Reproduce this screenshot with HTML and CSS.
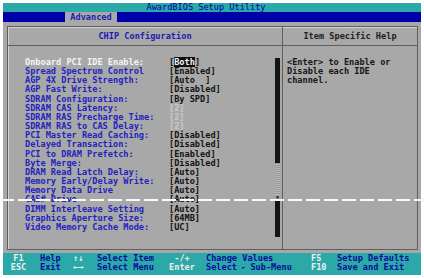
FILE: index.html
```html
<!DOCTYPE html>
<html lang="en">
<head>
  <meta charset="UTF-8">
  <title>AwardBIOS Setup Utility</title>
  <link rel="stylesheet" href="styles.css">
</head>
<body>
  <div class="screen">
    <div class="titlebar">AwardBIOS Setup Utility</div>
    <div class="menubar"><span class="tab">Advanced</span></div>

    <div class="frame">
      <div class="frame-head">
        <div class="head-main">CHIP Configuration</div>
        <div class="head-help">Item Specific Help</div>
      </div>

      <div class="frame-body">
        <div class="items">
          <div class="item-list">
            <div class="row current"><span class="label">Onboard PCI IDE Enable:</span><span class="value">[<span class="sel">Both</span>]</span></div>
            <div class="row"><span class="label">Spread Spectrum Control</span><span class="value">[Enabled]</span></div>
            <div class="row"><span class="label">AGP 4X Drive Strength:</span><span class="value">[Auto  ]</span></div>
            <div class="row"><span class="label">AGP Fast Write:</span><span class="value">[Disabled]</span></div>
            <div class="row"><span class="label">SDRAM Configuration:</span><span class="value">[By SPD]</span></div>
            <div class="row"><span class="label">SDRAM CAS Latency:</span><span class="value off">[2]</span></div>
            <div class="row"><span class="label">SDRAM RAS Precharge Time:</span><span class="value off">[2]</span></div>
            <div class="row"><span class="label">SDRAM RAS to CAS Delay:</span><span class="value off">[2]</span></div>
            <div class="row"><span class="label">PCI Master Read Caching:</span><span class="value">[Disabled]</span></div>
            <div class="row"><span class="label">Delayed Transaction:</span><span class="value">[Disabled]</span></div>
            <div class="row"><span class="label">PCI to DRAM Prefetch:</span><span class="value">[Enabled]</span></div>
            <div class="row"><span class="label">Byte Merge:</span><span class="value">[Disabled]</span></div>
            <div class="row"><span class="label">DRAM Read Latch Delay:</span><span class="value">[Auto]</span></div>
            <div class="row"><span class="label">Memory Early/Delay Write:</span><span class="value">[Auto]</span></div>
            <div class="row"><span class="label">Memory Data Drive</span><span class="value">[Auto]</span></div>
            <div class="row"><span class="label">CAS# Drive</span><span class="value">[Auto]</span></div>
            <div class="row"><span class="label">DIMM Interleave Setting</span><span class="value">[Auto]</span></div>
            <div class="row"><span class="label">Graphics Aperture Size:</span><span class="value">[64MB]</span></div>
            <div class="row"><span class="label">Video Memory Cache Mode:</span><span class="value">[UC]</span></div>
          </div>
          <div class="scrollbar">
            <div class="bar-top"></div>
            <div class="bar-thumb"></div>
            <div class="bar-arrow">&#9660;</div>
            <div class="bar-bottom"></div>
          </div>
        </div>
        <div class="help">
          &lt;Enter&gt; to Enable or<br>
          Disable each IDE<br>
          channel.
        </div>
      </div>
    </div>

    <div class="footer">
      <span class="key mid">F1</span><span class="desc pad6">Help</span>
      <span class="key">&uarr;&darr;</span><span class="desc">Select Item</span>
      <span class="key mid">-/+</span><span class="desc pad2">Change Values</span>
      <span class="key">F5</span><span class="desc">Setup Defaults</span>

      <span class="key mid">ESC</span><span class="desc pad6">Exit</span>
      <span class="key">&larr;&rarr;</span><span class="desc">Select Menu</span>
      <span class="key mid">Enter</span><span class="desc pad2">Select <span class="tri">&#9658;</span> Sub-Menu</span>
      <span class="key">F10</span><span class="desc">Save and Exit</span>
    </div>
  </div>

  <!-- scan artefact across the photo -->
  <div class="scanline"></div>
</body>
</html>
```

FILE: styles.css
```css
* {
  box-sizing: border-box;
}

body {
  margin: 0;
  width: 424px;
  height: 278px;
  overflow: hidden;
  position: relative;
  background: #fff;
  font-family: "DejaVu Sans Mono", "Liberation Mono", monospace;
  font-weight: bold;
  font-size: 8.6px;
}

.screen {
  margin: 3px 0 0 3px;
  width: 418px;
  height: 272px;
  background: #a8a8a8;
  display: flex;
  flex-direction: column;
}

/* Top bars */
.titlebar {
  height: 9px;
  line-height: 9px;
  background: #2ba8a8;
  color: #0000a8;
  text-align: center;
  padding-right: 12px;
  font-weight: normal;
}

.menubar {
  height: 10px;
  background: #0000a8;
  padding-left: 62px;
  display: flex;
}

.tab {
  width: 52px;
  height: 11px;
  line-height: 10px;
  background: #a8a8a8;
  color: #1c1cb4;
  text-align: center;
}

/* Main frame */
.frame {
  margin: 4px 0 0 4px;
  width: 411px;
  height: 224px;
  border: 1px solid #5e5e5e;
  box-shadow: inset 1px 1px 0 #d4d4d4;
  display: flex;
  flex-direction: column;
}

.frame-head {
  display: flex;
  height: 19px;
  line-height: 18px;
  border-bottom: 1px solid #5e5e5e;
}

.head-main {
  width: 275px;
  border-right: 1px solid #5e5e5e;
  color: #1c1cb4;
  text-align: center;
}

.head-help {
  flex: 1;
  color: #202020;
  text-align: center;
}

.frame-body {
  flex: 1;
  display: flex;
}

.items {
  width: 275px;
  border-right: 1px solid #5e5e5e;
  display: flex;
  padding-top: 12px;
}

.item-list {
  flex: 1;
  padding-left: 17px;
}

.row {
  display: grid;
  grid-template-columns: 144px 1fr;
  height: 9.17px;
  line-height: 9.17px;
  white-space: pre;
}

.label {
  color: #2323c0;
}

.current .label {
  color: #f4f4f4;
}

.value {
  color: #121212;
}

.value.off {
  color: #c8c8c8;
}

.sel {
  background: #101010;
  color: #f4f4f4;
}

/* Scroll bar */
.scrollbar {
  width: 5px;
  margin-right: 2px;
  height: 181px;
  display: flex;
  flex-direction: column;
}

.bar-top {
  height: 105px;
  background: #141414;
}

.bar-thumb {
  height: 32px;
  background: repeating-linear-gradient(0deg, #b4b4b4 0 1px, #9a9a9a 1px 2px);
}

.bar-arrow {
  height: 4px;
  font-size: 5px;
  line-height: 4px;
  color: #141414;
  text-align: center;
  overflow: hidden;
}

.bar-bottom {
  height: 38px;
  background: #141414;
}

/* Help column */
.help {
  flex: 1;
  padding: 12px 0 0 4px;
  line-height: 9.17px;
  color: #161616;
}

/* Key legend */
.footer {
  margin-top: auto;
  height: 22px;
  padding-top: 1px;
  background: #2ba8a8;
  display: grid;
  grid-template-columns: 31px 39px 24px 63px 44px 107px 26px 1fr;
  grid-auto-rows: 9px;
  line-height: 9px;
  white-space: nowrap;
}

.key {
  color: #eeeeee;
}

.key.mid {
  text-align: center;
}

.desc {
  color: #0c0c9c;
}

.pad6 {
  padding-left: 6px;
}

.pad2 {
  padding-left: 2px;
}

.tri {
  font-size: 5px;
  vertical-align: 1px;
}

.scanline {
  position: absolute;
  left: 0;
  top: 199px;
  width: 424px;
  height: 2px;
  background: repeating-linear-gradient(90deg, #fafafa 0 14px, transparent 14px 18px);
}
```
